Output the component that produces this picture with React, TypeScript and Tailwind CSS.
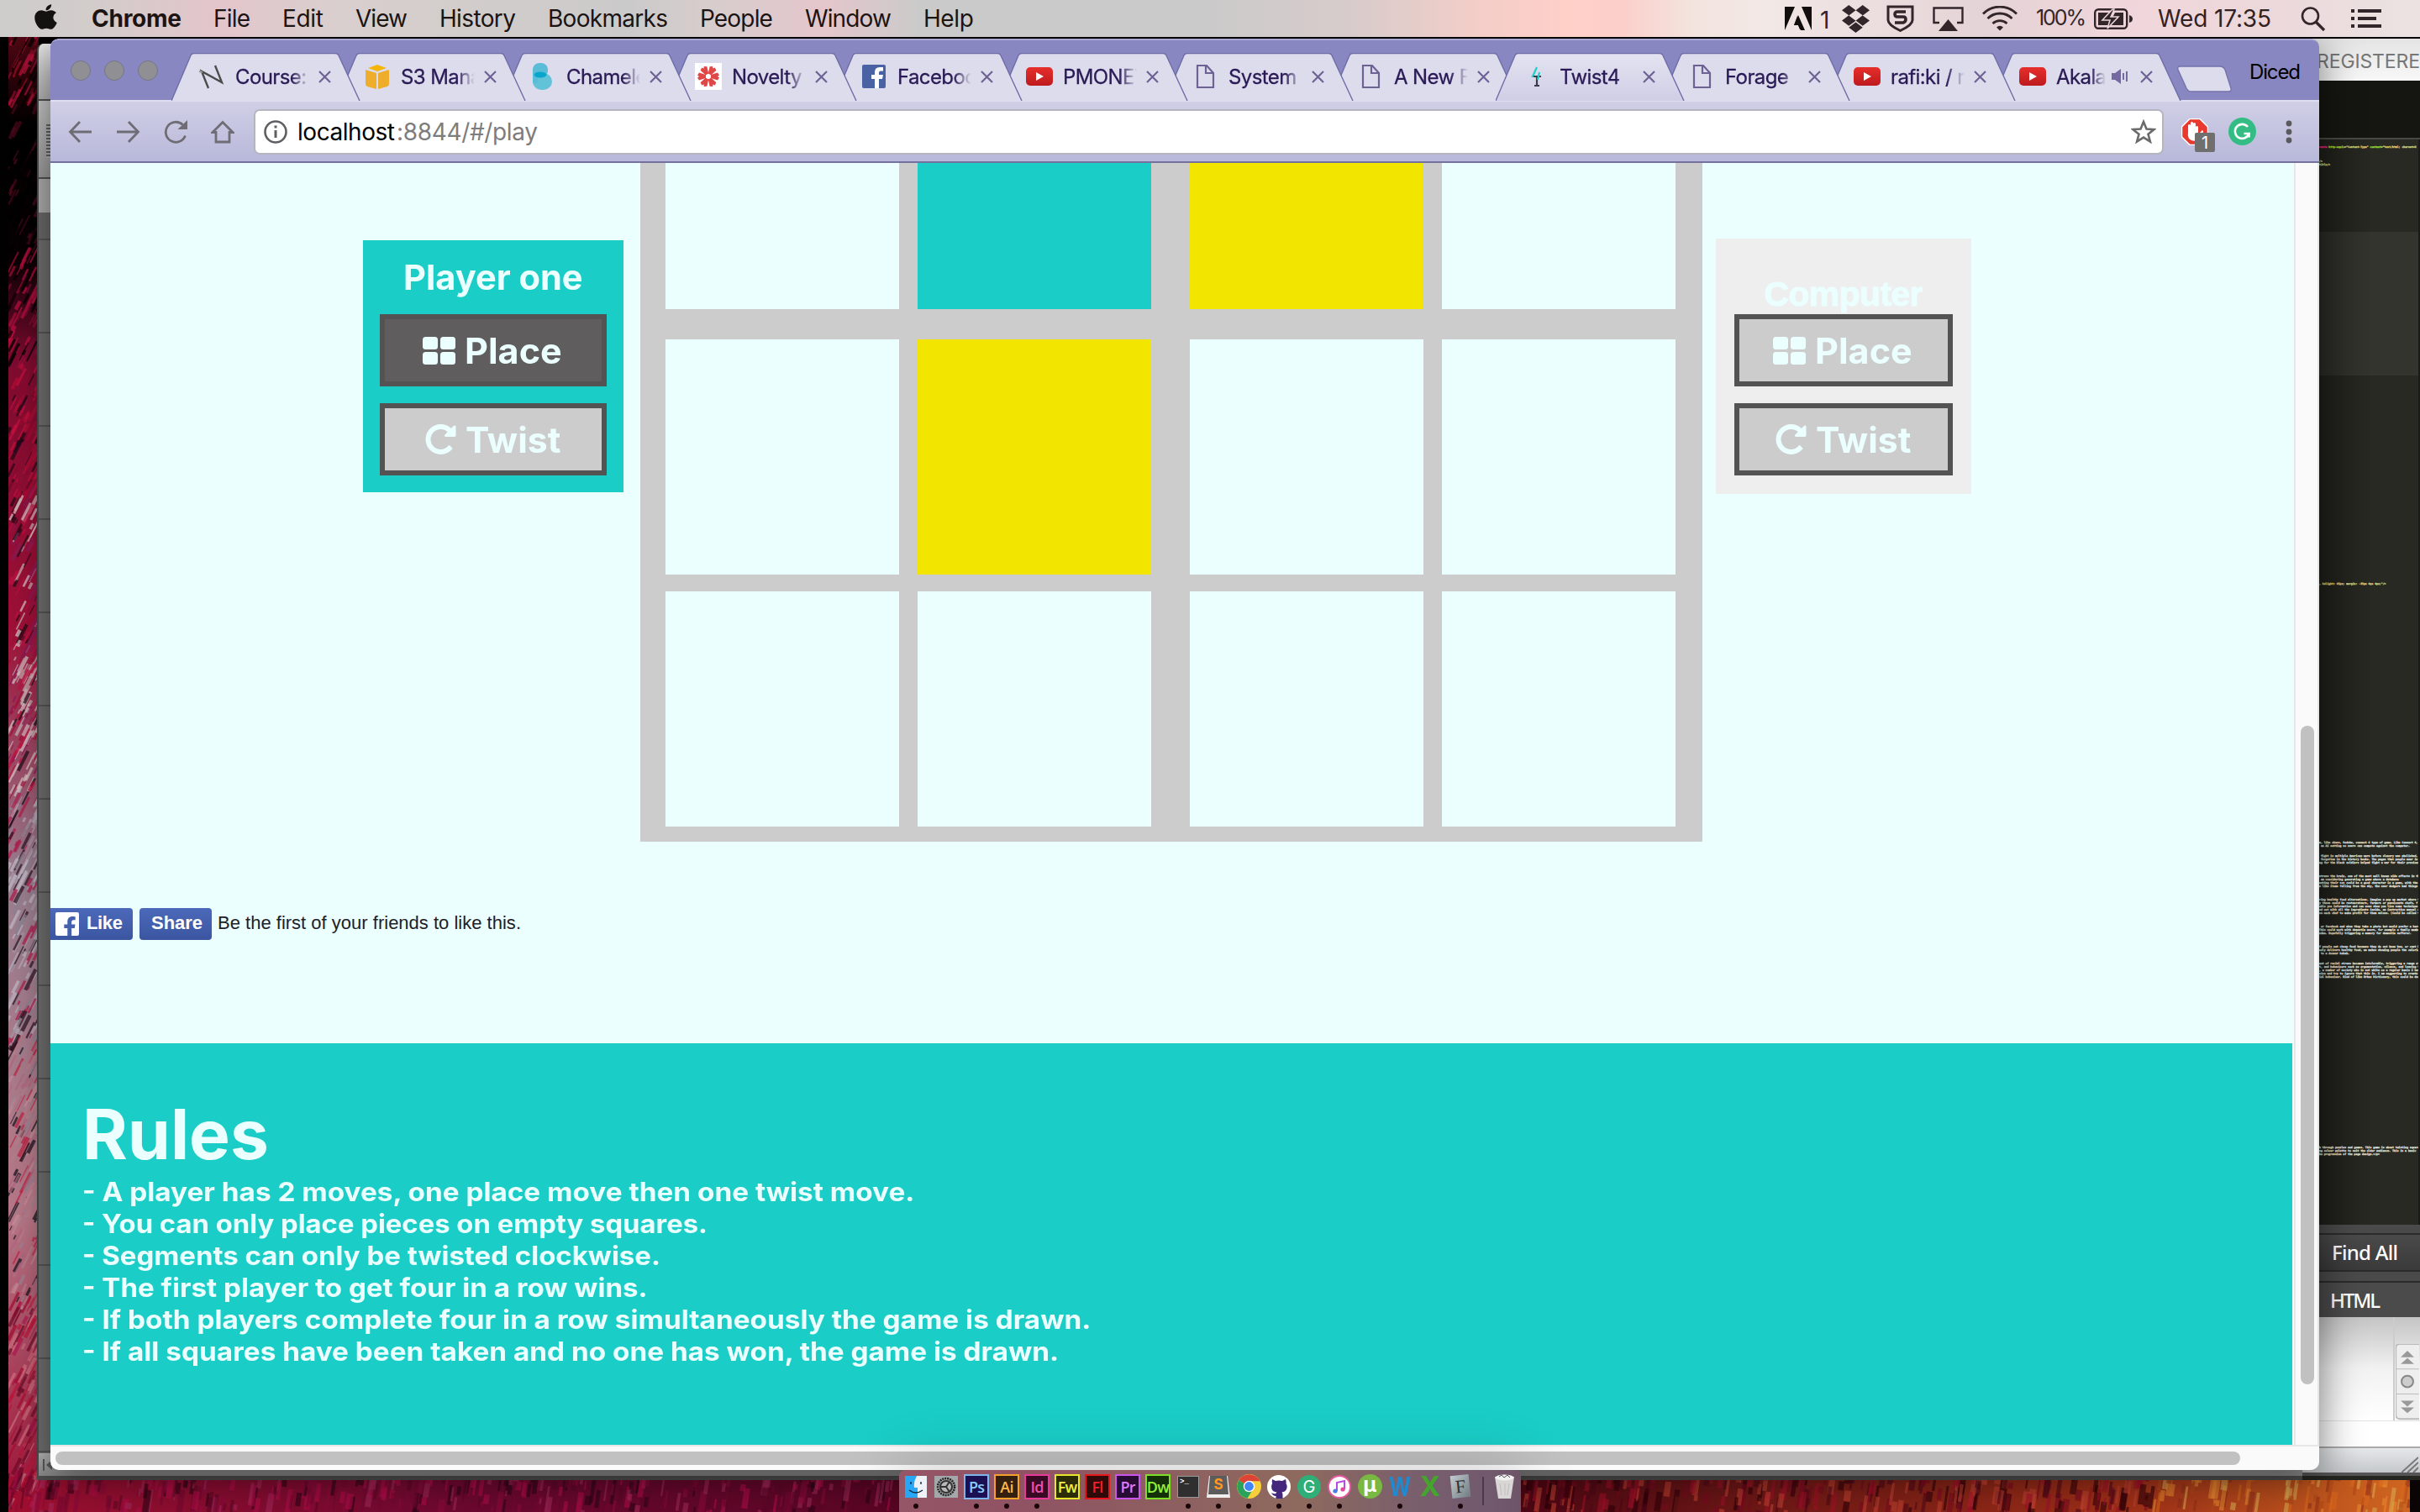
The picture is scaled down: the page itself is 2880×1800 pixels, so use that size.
import React, { useLayoutEffect, useRef, useState } from "react";
import { FaApple, FaDropbox, FaFacebookF, FaGithubAlt } from "react-icons/fa";

/* Text whose tracking is tuned so that it fills the given width. */
function Fit({ w, className = "", children }: { w: number; className?: string; children: string }) {
  const ref = useRef<HTMLSpanElement>(null);
  const [ls, setLs] = useState(0);
  useLayoutEffect(() => {
    if (ref.current) {
      const natural = ref.current.getBoundingClientRect().width;
      setLs((w - natural) / Math.max(1, children.length - 1));
    }
  }, [w, children]);
  return (
    <span ref={ref} className={"inline-block whitespace-pre " + className} style={{ letterSpacing: ls, marginRight: -ls }}>
      {children}
    </span>
  );
}

/* Text whose glyphs are widened so that it fills the given width. */
function Wide({ w, className = "", children }: { w: number; className?: string; children: string }) {
  const ref = useRef<HTMLSpanElement>(null);
  const [k, setK] = useState(1);
  useLayoutEffect(() => {
    if (ref.current) setK(w / ref.current.offsetWidth);
  }, [w, children]);
  return (
    <span className={"inline-block whitespace-pre " + className} style={{ width: w }}>
      <span ref={ref} className="inline-block origin-left" style={{ transform: `scaleX(${k})` }}>{children}</span>
    </span>
  );
}

/* ---------- wallpaper ---------- */
function rng(seed: number) {
  let s = seed;
  return () => {
    s = (s * 16807) % 2147483647;
    return s / 2147483647;
  };
}

function Wallpaper() {
  const r = rng(77);
  const zone = (y: number) => {
    if (y < 130) return ["#8f0f2c", "#b3123a", "#000", "#300"];
    if (y < 310) return ["#000", "#0a0104", "#4c0a1c", "#000"];
    if (y < 440) return ["#a80f38", "#000", "#7a0b35", "#c01040"];
    if (y < 600) return ["#b00c34", "#8f0a30", "#c8103f", "#200818"];
    if (y < 960) return ["#c01040", "#a30d36", "#d9c8c8", "#1c0a14", "#8b1a58", "#c8b8b8"];
    if (y < 1250) return ["#a89aa8", "#c3b9c6", "#b01848", "#b8aebc", "#8f8494", "#2a1020"];
    if (y < 1560) return ["#9c8496", "#b8808c", "#c8909c", "#c02040", "#101018", "#b06880"];
    return ["#c01238", "#a00c30", "#d07080", "#700a28", "#b01850"];
  };
  const left = Array.from({ length: 900 }, () => {
    const y = 44 + r() * 1756;
    const c = zone(y);
    return { x: 8 + r() * 34, y, l: 4 + r() * 22, c: c[Math.floor(r() * c.length)], w: 1 + r() * 3.5 };
  });
  const bottom = Array.from({ length: 1100 }, () => {
    const x = r() * 2880;
    const c =
      x > 2560
        ? ["#d8651c", "#e88830", "#b04818", "#d8a850", "#903018"]
        : x > 1800
          ? ["#7a0a20", "#a01028", "#300008", "#c04030", "#500818"]
          : ["#8a0a3a", "#5c0726", "#b00c48", "#2c0414", "#740830", "#a02858"];
    return { x, y: 1758 + r() * 52, l: 6 + r() * 26, c: c[Math.floor(r() * c.length)], w: 2 + r() * 6 };
  });
  return (
    <svg className="absolute inset-0" width="2880" height="1800" viewBox="0 0 2880 1800">
      <defs>
        <linearGradient id="wl" x1="0" y1="0" x2="0" y2="1">
          <stop offset="0" stopColor="#500814" />
          <stop offset=".06" stopColor="#000" />
          <stop offset=".15" stopColor="#080004" />
          <stop offset=".22" stopColor="#800c30" />
          <stop offset=".4" stopColor="#a01038" />
          <stop offset=".57" stopColor="#9a8090" />
          <stop offset=".8" stopColor="#b87888" />
          <stop offset="1" stopColor="#a01035" />
        </linearGradient>
        <linearGradient id="wb" x1="0" y1="0" x2="1" y2="0">
          <stop offset="0" stopColor="#a01030" />
          <stop offset=".2" stopColor="#6c0830" />
          <stop offset=".6" stopColor="#480414" />
          <stop offset=".88" stopColor="#a03018" />
          <stop offset="1" stopColor="#d06820" />
        </linearGradient>
      </defs>
      <rect width="2880" height="1800" fill="#050103" />
      <rect x="10" y="44" width="36" height="1756" fill="url(#wl)" />
      <rect x="10" y="1758" width="2870" height="42" fill="url(#wb)" />
      {left.map((s, i) => (
        <path key={i} d={`M${s.x} ${s.y}l${s.l * 0.5} ${-s.l}`} stroke={s.c} strokeWidth={s.w} opacity=".7" />
      ))}
      {bottom.map((s, i) => (
        <path key={i} d={`M${s.x} ${s.y}l${s.l * 0.15} ${-s.l}`} stroke={s.c} strokeWidth={s.w} opacity=".6" />
      ))}
      <rect x="0" y="44" width="10" height="1756" fill="#020202" />
      <rect x="2868" y="1762" width="12" height="38" fill="#0a0404" />
    </svg>
  );
}

/* ---------- menu bar ---------- */
const menus: [string, number][] = [
  ["File", 44], ["Edit", 49], ["View", 62], ["History", 91], ["Bookmarks", 143], ["People", 87], ["Window", 103], ["Help", 60],
];

function MenuBar() {
  return (
    <div className="absolute left-0 top-0 flex h-11 w-[2880px] items-center bg-[linear-gradient(90deg,#cdcdcb_0%,#d3cccb_4%,#e3c5ca_9%,#d9cfce_14%,#d2cdcb_19%,#cbcaca_26%,#d6cdcc_29%,#e4c6cc_34%,#cbcaca_38%,#cbcaca_50%,#d8cccb_56%,#f3cdc8_61%,#ffd0c8_65%,#fccfca_67%,#f3e4de_70%,#f2e8e6_73%,#e4d3d6_82%,#f0d6da_88%,#ecd8da_94%,#ebe3e2_100%)] text-[28px] text-[#1c1412]">
      <FaApple className="ml-[41px] mt-[-4px] h-[34px] w-[27px] text-[#141210]" preserveAspectRatio="none" />
      <Fit w={107} className="ml-[41px] font-bold">Chrome</Fit>
      <div className="ml-[38px] flex items-center gap-[38px]">
        {menus.map(([m, w]) => (
          <Fit key={m} w={w}>{m}</Fit>
        ))}
      </div>
      <div className="ml-auto flex items-center pr-[46px] text-[#33262a]">
        <svg width="32" height="28" viewBox="0 0 32 28">
          <path d="M0 0h32v28H0z" fill="#120e0e" />
          <path d="M12 0h8l12 28h-8l-8-18-5 12h5l3 6H0z" fill="#efe4e2" />
          <path d="M15 11l7 16h-4l-2-5h-5z" fill="#120e0e" />
        </svg>
        <span className="ml-[10px] mt-[4px] w-[14px]">1</span>
        <FaDropbox className="ml-[12px] h-[33px] w-[33px]" preserveAspectRatio="none" viewBox="0 32 528 448" />
        <svg className="ml-[20px]" width="33" height="32" viewBox="0 0 33 32" fill="none" stroke="currentColor">
          <path d="M2 2h29v16c0 5-7 9-14.500 12.500C9 27 2 23 2 18z" strokeWidth="3" />
          <path d="M23 8H13q-3 0-3 3t3 3h7q3 0 3 3t-3 4h-10" strokeWidth="3.600" />
        </svg>
        <svg className="ml-[22px]" width="37" height="29" viewBox="0 0 37 29">
          <path d="M8 19H1.500V1.500h34V19H29" fill="none" stroke="currentColor" strokeWidth="2.400" />
          <path d="M18.500 15L30 29H7z" fill="currentColor" />
        </svg>
        <svg className="ml-[22px]" width="42" height="30" viewBox="0 0 42 30" fill="none" stroke="currentColor" strokeWidth="2.800">
          <path d="M1 9.500a28 28 0 0 1 40 0M6.500 15a20.500 20.500 0 0 1 29 0M12.500 21a12.500 12.500 0 0 1 17 0" />
          <path d="M21 29.500l-4-4a5.500 5.500 0 0 1 8 0z" fill="currentColor" stroke="none" />
        </svg>
        <Fit w={60} className="ml-[22px] text-[25px]">100%</Fit>
        <svg className="ml-[9px]" width="46" height="25" viewBox="0 0 46 25">
          <rect x="1.200" y="1.200" width="38" height="22.500" rx="4" fill="none" stroke="currentColor" strokeWidth="2.400" />
          <path d="M5 5h17l-9 9h7l-3 6H5zM35 20H20l9-9h-7l3-6h10z" fill="currentColor" />
          <path d="M22 1l-12 13h9l-3 10 13-14h-9l4-9z" fill="currentColor" stroke="#ead5d9" strokeWidth="1.500" />
          <path d="M42 8q4 1 4 4.500t-4 4.500z" fill="currentColor" />
        </svg>
        <Fit w={135} className="ml-[30px] text-[#33211f]">Wed 17:35</Fit>
        <svg className="ml-[35px]" width="30" height="29" viewBox="0 0 30 29" fill="none" stroke="currentColor" strokeWidth="2.600">
          <circle cx="11.500" cy="11" r="9.500" />
          <path d="M18 18l10 10" strokeWidth="3.400" />
        </svg>
        <svg className="ml-[30px]" width="36" height="22" viewBox="0 0 36 22" fill="currentColor">
          <path d="M0 0h4v4H0zM8 0h28v4H8zM0 9h4v4H0zM8 9h22v4H8zM0 18h4v4H0zM8 18h28v4H8z" />
        </svg>
      </div>
    </div>
  );
}

/* ---------- windows behind the browser ---------- */
const notes: { top: string; lines: string[] }[] = [
  { top: "mt-[0px]", lines: ["m, like chess, Sudoku, connect 4 type of game. Like Connect 4,", " an AI setting so users can compete against the computer."] },
  { top: "mt-[8px]", lines: [" fight in multiple American wars before slavery was abolished, t", " forgotten in the history books. The pages that people wear in", "ng for the black soldiers helped fight a war for their previous"] },
  { top: "mt-[12px]", lines: ["stress the brain, one of the most well known side effects in the", " am considering generating a game where a database", "enting their son could be a good character in a game, with the s", "e like items falling from the sky, the user dodgers bad things"] },
  { top: "mt-[12px]", lines: ["ring healthy food alternatives. Imagine a pop up market where t", "y these could be restaurateurs, farmers or passionate chefs, f", "able you information and can even show you live some technique", "ed out with all the ingredients inside, an instruction manual a", "ve each chef to make profit for them selves. (Could be called t"] },
  { top: "mt-[12px]", lines: [" or facebook and when they take a photo but would prefer a hard", "This could work with dementia users, for example a family member", "ndma. Hopefully triggering a memory for dementia sufferer."] },
  { top: "mt-[12px]", lines: ["f people eat cheap food because they do not know how, or cant be", "only delivers healthy food, we makes showing people the calorie", " to a donner kebab."] },
  { top: "mt-[8px]", lines: ["ant of racial stress becomes intolerable, triggering a range of", "t, and behaviours such as argumentation, silence, and leaving t", ", a number of society who is not white on a regular basis I have", "sion and try to ignore that this is. I am suggesting to create a", "ial behaviour. Kind of like Urban Dictionary, this could be don"] },
  { top: "mt-[199px]", lines: ["h through puzzles and games. This game is about twisting squares", "ng colour palette to suit the older audience. This is a basic", "he progression of the page design.</p>"] },
];

function BackWindows() {
  return (
    <>
      <div className="absolute left-[44px] top-[52px] flex h-[1710px] w-[2836px] flex-col overflow-hidden rounded-tl-lg border-b-[5px] border-l-2 border-[#4f4f4f] bg-[#6f6f6f]">
        <div className="h-[68px] w-4 border-b-2 border-[#555] bg-gradient-to-b from-[#ededed] to-[#bdbdbd]" />
        <div className="flex h-[93px] w-4 items-start justify-end border-b-2 border-[#555] bg-gradient-to-b from-[#d0d0d0] to-[#a2a2a2]">
          <div className="mt-[28px] h-[40px] w-[7px] bg-[repeating-linear-gradient(180deg,#666_0_2px,#bbb_2px_4px)]" />
        </div>
        <div className="h-[40px] w-4 bg-[#b5b5b5]" />
        <div className="h-[33px] w-4 border-b-2 border-[#5a5a5a]" />
        <div className="flex-1 bg-[repeating-linear-gradient(180deg,#747474_0_109px,#5a5a5a_109px_111px)]" />
        <div className="flex h-[27px] items-center bg-gradient-to-b from-[#bdbdbd] to-[#8c8c8c] pl-1">
          <svg width="14" height="14" viewBox="0 0 14 14" fill="#5c5c5c"><path d="M1 0h2v14H1zM12 1v12L5 7z" /></svg>
        </div>
      </div>
      <div className="absolute left-[2740px] top-[46px] flex h-[1716px] w-[140px] flex-col overflow-hidden bg-[#252620]">
        <div className="flex h-[50px] shrink-0 items-center justify-end bg-gradient-to-b from-[#e4e4e4] to-[#f8f8f8] text-[23px] text-[#777]">
          <Fit w={123} className="mt-[5px]">REGISTERE</Fit>
        </div>
        <div className="h-[70px] shrink-0 border-b-2 border-[#484844] bg-[#151611]" />
        <div className="relative h-[1292px] shrink-0 overflow-hidden border-r-2 border-[#1a1a1a] bg-gradient-to-r from-[#1b1c17] to-[#282922] to-60% pl-[20px] font-['DejaVu_Sans_Mono'] text-[3.150px] font-bold leading-[4px] whitespace-pre text-[#e4e4de] [-webkit-text-stroke:0.25px_currentColor]">
          <div className="mt-[7px] text-[#e0dc80]"><span className="text-[#f92672]">=meta </span><span className="text-[#a6e22e]">http-equiv</span>="Content-Type" <span className="text-[#a6e22e]">content</span>="text/html; charset=U</div>
          <div className="mt-[13px] text-[#e0d884]">/&gt;</div>
          <div className="text-[#e0d884]">title/&gt;</div>
          <div className="-ml-[20px] mt-[78px] h-[171px] bg-white/5" />
          <div className="mt-[246px] text-[#e0d884]">, helight: 45px; margin: -35px 0px 0px;"/&gt;</div>
          <div className="mt-[304px]">
            {notes.map((n, i) => (
              <div key={i} className={n.top}>
                {n.lines.map((l) => <div key={l}>{l}</div>)}
              </div>
            ))}
          </div>
        </div>
        <div className="flex h-[110px] shrink-0 flex-col bg-[#4a4a4a] font-['Noto_Sans'] text-[24px] font-medium text-white">
          <div className="mt-[10px] flex h-[46px] items-center border-y-2 border-[#2b2b2b] bg-gradient-to-b from-[#4a4a4a] to-[#3a3a3a] pl-[35px]">
            <Fit w={79}>Find All</Fit>
          </div>
          <div className="mt-[11px] flex h-[43px] items-center border-t-2 border-[#2b2b2b] bg-[#4b4b4b] pl-[33px]">
            <Fit w={60}>HTML</Fit>
          </div>
        </div>
        <div className="flex h-[123px] shrink-0 bg-gradient-to-b from-[#c4c4c4] via-[#f2f2f2] via-50% to-white">
          <div className="w-[110px] border-r-2 border-[#ccc]" />
          <div className="flex flex-1 flex-col items-center">
            <div className="h-[32px]" />
            <svg width="28" height="92" viewBox="0 0 28 92">
              <rect x="0" y="0" width="34" height="90" rx="5" fill="#eee" stroke="#bbb" strokeWidth="2" />
              <path d="M0 30h28M0 60h28" stroke="#bbb" />
              <path d="M6 16l8-8 8 8zM6 24l8-7 8 7zM6 68l8 7 8-7zM6 76l8 7 8-7z" fill="#999" />
              <ellipse cx="14" cy="45" rx="7" ry="7" fill="#ccc" stroke="#888" strokeWidth="2" />
            </svg>
          </div>
        </div>
        <div className="h-[31px] shrink-0 border-t border-[#e4e4e4] bg-white" />
        <div className="flex h-[35px] shrink-0 items-end justify-end border-b-[4px] border-t-2 border-b-[#555] border-t-[#aaa] bg-gradient-to-b from-[#e6e8ea] to-[#c5c8ca]">
          <svg className="mr-[2px]" width="20" height="20" viewBox="0 0 20 20" stroke="#777" strokeWidth="2"><path d="M0 20L20 2M7 20L20 8M14 20l6-6" /></svg>
        </div>
      </div>
    </>
  );
}

/* ---------- browser tabs ---------- */
type Fav = "n" | "s3" | "b" | "nov" | "fb" | "yt" | "doc" | "tw";
const tabs: { title: string; fav: Fav; active?: boolean; audio?: boolean }[] = [
  { title: "Course:", fav: "n" },
  { title: "S3 Mana", fav: "s3" },
  { title: "Chamele", fav: "b" },
  { title: "Novelty", fav: "nov" },
  { title: "Faceboo", fav: "fb" },
  { title: "PMONEY", fav: "yt" },
  { title: "System", fav: "doc" },
  { title: "A New F", fav: "doc" },
  { title: "Twist4", fav: "tw", active: true },
  { title: "Forage", fav: "doc" },
  { title: "rafi:ki / r", fav: "yt" },
  { title: "Akala", fav: "yt", audio: true },
];

function Favicon({ kind }: { kind: Fav }) {
  switch (kind) {
    case "n":
      return <svg width="32" height="32" viewBox="0 0 32 32" fill="none"><path d="M12 30L4 10l24 13L20 3" stroke="#4c4c4c" strokeWidth="2.400" /><path d="M1 10l4 1" stroke="#999" strokeWidth="2" /></svg>;
    case "s3":
      return <svg width="32" height="32" viewBox="0 0 32 32"><path d="M2 8l13 4v19L4 28q-2-1-2-3zM30 8l-13 4v19l11-3q2-1 2-3z" fill="#eeae2c" /><path d="M16 2L5 6l11 4 11-4z" fill="#f5b50c" /></svg>;
    case "b":
      return <svg width="32" height="32" viewBox="0 0 32 32"><rect x="4" y="0" width="18" height="17" rx="8" fill="#5bbcd8" /><rect x="4" y="12" width="23" height="20" rx="10" fill="#62c3d8" /><path d="M4 7h6v17H4z" fill="#5bbcd8" /><ellipse cx="13" cy="14" rx="7.500" ry="3.500" fill="#08a6cc" /></svg>;
    case "nov":
      return (
        <svg width="32" height="32" viewBox="0 0 32 32">
          <path d="M0 0h32v32H0z" fill="#fff" />
          <g fill="#e04848">
            {[30, 90, 150, 210, 270, 330].map((a) => <path key={a} d="M14 13l-2.500-8 3-2 1.500 2 1.500-2 3 2L18 13z" transform={`rotate(${a} 16 16)`} />)}
          </g>
          <circle cx="16" cy="16" r="2.600" fill="#fff" />
        </svg>
      );
    case "fb":
      return <svg width="32" height="32" viewBox="0 0 32 32"><rect x="2" y="2" width="28" height="28" rx="2" fill="#4862a3" /><path d="M17 30V19h-4v-5h4v-3q0-6 6-6h4v4.500h-3q-2 0-2 2V14h5l-1 5h-4v11z" fill="#fff" /></svg>;
    case "yt":
      return (
        <svg width="32" height="32" viewBox="0 0 32 32">
          <defs><linearGradient id="ytg" x1="0" y1="0" x2="0" y2="1"><stop offset="0" stopColor="#e62e2b" /><stop offset="1" stopColor="#be1a1e" /></linearGradient></defs>
          <rect x="0" y="5" width="32" height="22" rx="5" fill="url(#ytg)" /><path d="M12 11l9 5-9 5z" fill="#fff" />
        </svg>
      );
    case "doc":
      return <svg width="32" height="32" viewBox="0 0 32 32" fill="none" stroke="#6d6293" strokeWidth="2.200"><path d="M7 3h11l8 9v17H7zM17 3v9h9" /></svg>;
    default:
      return <svg width="32" height="32" viewBox="0 0 32 32" fill="none" strokeWidth="2.200"><path d="M17 5l-5 11h9" stroke="#1fcfc8" /><path d="M17 15v12M13 16h9M14 27h6" stroke="#3b3b4b" /><path d="M20 11l-2 9" stroke="#1fcfc8" /></svg>;
  }
}

function Tab({ t, z }: { t: (typeof tabs)[number]; z: number }) {
  return (
    <div className="relative -mr-[27px] flex h-[56px] w-[224px] shrink-0 items-center pl-[32px]" style={{ zIndex: z }}>
      <svg className="absolute left-0 top-0" width="226" height="57" viewBox="0 0 226 57">
        <defs><linearGradient id="actg" x1="0" y1="0" x2="0" y2="1"><stop offset="0" stopColor="#e4e3f1" /><stop offset="1" stopColor="#cfcee6" /></linearGradient></defs>
        <path d="M0 57L23 3q1-2.500 4-2.500h168q3 0 4 2.500L224 57z" fill={t.active ? "url(#actg)" : "#dddcec"} />
        <path d="M0 57L23 3q1-2.500 4-2.500h168q3 0 4 2.500L224 57" fill="none" stroke="#6f6da8" strokeWidth="1.400" />
      </svg>
      <div className="relative shrink-0"><Favicon kind={t.fav} /></div>
      <div className={"relative ml-[12px] mt-[1px] shrink-0 overflow-hidden whitespace-pre text-[24px] tracking-[-0.6px] text-[#2a1a55] [-webkit-text-stroke:0.3px_#2a1a55] " + (t.audio ? "w-[59px] [mask-image:linear-gradient(90deg,#000_70%,transparent)]" : "w-[88px] [mask-image:linear-gradient(90deg,#000_76%,transparent)]")}>
        {t.title}
      </div>
      {t.audio && (
        <svg className="relative ml-[7px]" width="20" height="18" viewBox="0 0 20 18" fill="#7668a0"><path d="M0 5h4l7-5v18l-7-5H0zM13 5h2v8h-2zM17 3h2v12h-2z" /></svg>
      )}
      <svg className={t.audio ? "relative ml-[14px]" : "relative ml-[11px]"} width="15" height="15" viewBox="0 0 15 15" stroke="#6d6293" strokeWidth="2.200"><path d="M1 1l13 13M14 1L1 14" /></svg>
    </div>
  );
}

function TabStrip() {
  return (
    <div className="flex h-[73px] items-end rounded-t-[9px] border-t-2 border-[#a9a8d4] bg-[#8987c1]">
      <div className="mb-[23px] ml-[24px] flex w-[120px] gap-4">
        {[0, 1, 2].map((i) => <div key={i} className="size-6 rounded-full border border-[#757585] bg-[#909094]" />)}
      </div>
      <div className="isolate flex">
        {tabs.map((t, i) => <Tab key={i} t={t} z={t.active ? 20 : 12 - i} />)}
      </div>
      <svg className="mb-[9px] ml-[22px]" width="66" height="32" viewBox="0 0 66 32"><path d="M4 1h48q4 0 6 4l7 22q1 4-3 4H18q-4 0-6-4L2 5q-1-4 2-4z" fill="#dddcec" stroke="#7472aa" strokeWidth="1.400" /></svg>
      <Fit w={61} className="mb-[15px] ml-[21px] text-[24px] text-black">Diced</Fit>
    </div>
  );
}

function Toolbar() {
  return (
    <div className="flex h-[75px] items-center border-b-2 border-t-2 border-b-[#74719f] border-t-[#dfdef0] bg-gradient-to-b from-[#d0cfe6] to-[#b8b8da] pl-[21px] text-[#6e6d75]">
      <div className="flex items-center gap-[28px]">
        <svg width="29" height="28" viewBox="0 0 29 28" fill="none" stroke="currentColor" strokeWidth="2.800"><path d="M28 14H3M14 2L2.500 14 14 26" /></svg>
        <svg width="29" height="28" viewBox="0 0 29 28" fill="none" stroke="currentColor" strokeWidth="2.800"><path d="M1 14h25M15 2l11.500 12L15 26" /></svg>
        <svg width="28" height="28" viewBox="0 0 28 28" fill="none" stroke="currentColor" strokeWidth="2.800"><path d="M25.500 18.500A12 12 0 1 1 22.500 5.500" /><path d="M28 0v11H16.500z" fill="currentColor" stroke="none" /></svg>
        <svg width="28" height="28" viewBox="0 0 28 28" fill="none" stroke="currentColor" strokeWidth="2.800"><path d="M2 14.500L14 2.500l12 12h-4V26H6V14.500z" /></svg>
      </div>
      <div className="ml-[23px] flex h-[54px] w-[2273px] items-center rounded-[7px] border-2 border-[#b5b5bf] bg-white pl-[10px] pr-[7px] text-[28px]">
        <svg width="28" height="28" viewBox="0 0 28 28" fill="none" stroke="#5f5f63" strokeWidth="2.600"><circle cx="14" cy="14" r="12.500" /><path d="M14 12v9M14 6.500v3" strokeWidth="3" /></svg>
        <Fit w={116} className="ml-[12px] text-black">localhost</Fit>
        <Fit w={168} className="ml-[2px] text-[#7d7d7d]">:8844/#/play</Fit>
        <svg className="ml-auto" width="30" height="29" viewBox="0 0 30 29" fill="none" stroke="#6b6b6b" strokeWidth="2.600"><path d="M15 3l3.500 8.500 9 .6-7 5.700 2.400 8.800L15 21.600l-7.900 5 2.400-8.800-7-5.700 9-.6z" /></svg>
      </div>
      <div className="relative ml-[21px] mt-[1px] size-[32px]">
        <svg width="32" height="32" viewBox="0 0 32 32"><path d="M10 .5h12L31.500 10v12L22 31.500H10L.5 22V10z" fill="#e9392f" stroke="#fff" strokeWidth="1.500" /><path d="M10 17V8q1.500-2 3 0v6-9q1.500-2 3 0v9-8q1.500-2 3 0v9-5q1.500-2 3 0v9l5-5q2 1 0 4l-5 7q-6 4-11-1-2-4-1-7z" fill="#fff" transform="translate(-2 0)" /></svg>
        <div className="absolute left-[16px] top-[17px] flex h-[23px] w-[24px] items-center justify-center rounded-[2px] bg-[#6f6f70] text-[20px] text-white">1</div>
      </div>
      <svg className="ml-[24px]" width="33" height="33" viewBox="0 0 33 33"><circle cx="16.500" cy="16.500" r="16.500" fill="#33bd84" /><path d="M23 11a8.500 8.500 0 1 0 1.500 8h-6m6 0v4.500" fill="none" stroke="#fff" strokeWidth="2.600" /></svg>
      <svg className="ml-[35px]" width="8" height="28" viewBox="0 0 8 28" fill="#5a5a5e"><circle cx="4" cy="4" r="3.400" /><circle cx="4" cy="14" r="3.400" /><circle cx="4" cy="24" r="3.400" /></svg>
    </div>
  );
}

/* ---------- game page ---------- */
function GridIcon() {
  return (
    <svg width="39" height="33" viewBox="0 0 39 33" fill="#ebffff">
      <rect width="18" height="15" rx="3.500" /><rect x="21" width="18" height="15" rx="3.500" />
      <rect y="18" width="18" height="15" rx="3.500" /><rect x="21" y="18" width="18" height="15" rx="3.500" />
    </svg>
  );
}
function RepeatIcon() {
  return (
    <svg width="37" height="36" viewBox="128 128 1536 1536" fill="#ebffff">
      <path d="M1664 256v448q0 26-19 45t-45 19h-448q-42 0-59-40-17-39 14-69l138-138q-148-137-349-137-104 0-198.500 40.500t-163.500 109.500-109.500 163.500-40.500 198.500 40.500 198.500 109.500 163.500 163.500 109.500 198.500 40.500q119 0 225-52t179-147q7-10 23-12 15 0 25 9l137 138q9 8 9.500 20.500t-7.500 22.500q-109 132-264 204.500t-327 72.500q-156 0-298-61t-245-164-164-245-61-298 61-298 164-245 245-164 298-61q147 0 284.500 55.500t244.500 156.500l130-129q29-31 70-14 39 17 39 59z" />
    </svg>
  );
}

function Moves({ active }: { active?: boolean }) {
  return (
    <div className="flex flex-col gap-5 text-[42px] font-bold leading-none text-[#ebffff]">
      <div className={"flex h-[86px] items-center justify-center border-[6px] border-[#535353] pr-[2px] " + (active ? "bg-[#605d5e]" : "bg-[#cccccc]")}>
        <GridIcon />
        <Wide w={116} className="ml-[11px] mt-[1px]">Place</Wide>
      </div>
      <div className="flex h-[86px] items-center justify-center border-[6px] border-[#535353] bg-[#cccccc] pr-[2px]">
        <RepeatIcon />
        <Wide w={113} className="ml-[11px] mt-[1px]">Twist</Wide>
      </div>
    </div>
  );
}

const E = "bg-[#ebffff]";
const T = "bg-[#1acdc7]";
const Y = "bg-[#f2e600]";

function Quadrant({ cells, rows }: { cells: string[]; rows: string }) {
  return (
    <div className={"grid grid-cols-[278px_278px] gap-x-[22px] gap-y-5 " + rows}>
      {cells.map((c, i) => <div key={i} className={c} />)}
    </div>
  );
}

function Board() {
  return (
    <div className="ml-5 flex h-[808px] w-[1264px] flex-col gap-9 bg-[#cccccc] pl-[30px]">
      <div className="flex gap-[46px]">
        <Quadrant cells={[E, T]} rows="grid-rows-[174px]" />
        <Quadrant cells={[Y, E]} rows="grid-rows-[174px]" />
      </div>
      <div className="flex gap-[46px]">
        <Quadrant cells={[E, Y, E, E]} rows="grid-rows-[280px_280px]" />
        <Quadrant cells={[E, E, E, E]} rows="grid-rows-[280px_280px]" />
      </div>
    </div>
  );
}

const rules: [string, number][] = [
  ["- A player has 2 moves, one place move then one twist move.", 991],
  ["- You can only place pieces on empty squares.", 744],
  ["- Segments can only be twisted clockwise.", 688],
  ["- The first player to get four in a row wins.", 673],
  ["- If both players complete four in a row simultaneously the game is drawn.", 1200],
  ["- If all squares have been taken and no one has won, the game is drawn.", 1162],
];

function Page() {
  return (
    <div className="flex w-[2670px] flex-col bg-[#ebffff]">
      <div className="flex h-[886px] items-start pl-[372px]">
        <div className="mt-[92px] h-[300px] w-[310px] bg-[#1acdc7] px-5">
          <div className="flex h-[88px] items-center justify-center pt-[2px] text-[41px] font-bold text-[#ebffff]">
            <Wide w={214}>Player one</Wide>
          </div>
          <Moves active />
        </div>
        <Board />
        <div className="ml-4 mt-[90px] h-[304px] w-[304px] bg-[#eeeeee] px-[22px]">
          <div className="flex h-[90px] items-end justify-center font-['Liberation_Sans'] text-[41px] font-bold leading-[47px] text-[#ebffff]">
            <Fit w={189} className="[-webkit-text-stroke:1px_#ebffff]">Computer</Fit>
          </div>
          <Moves />
        </div>
      </div>
      <div className="flex h-10 items-center font-['Liberation_Sans'] text-[22px] font-bold text-white">
        <div className="flex h-[38px] w-[98px] items-center rounded-r-[4px] bg-gradient-to-b from-[#4c69ba] to-[#3b55a0] pl-[6px]">
          <div className="flex size-7 items-end justify-end overflow-hidden rounded-[2px] bg-white pr-[3px] text-[#4560ae]"><FaFacebookF className="-mb-[2px] h-[25px] w-[16px]" /></div>
          <Fit w={43} className="-mt-[3px] ml-[9px]">Like</Fit>
        </div>
        <div className="ml-2 flex h-[38px] w-[86px] items-center rounded-[4px] bg-gradient-to-b from-[#4c69ba] to-[#3b55a0] pl-[14px]">
          <Fit w={61} className="-mt-[3px]">Share</Fit>
        </div>
        <Fit w={361} className="-mt-[4px] ml-[7px] font-normal text-[#1d2129]">Be the first of your friends to like this.</Fit>
      </div>
      <div className="mt-[122px] flex h-[478px] w-[2668px] flex-col bg-[#1acdc7] pl-[38px] pt-[60px] font-bold text-[#ebffff]">
        <div className="flex h-[98px] items-center text-[82px] leading-none"><Wide w={222}>Rules</Wide></div>
        <div className="flex flex-col text-[31px] leading-[38px]">
          {rules.map(([r, w]) => <div key={r} className="h-[38px]"><Wide w={w}>{r}</Wide></div>)}
        </div>
      </div>
    </div>
  );
}

function Browser() {
  return (
    <div className="absolute left-[60px] top-[46px] flex h-[1704px] w-[2700px] flex-col overflow-hidden rounded-b-[10px] rounded-t-[9px] shadow-[0_10px_50px_rgba(0,0,0,0.55)]">
      <TabStrip />
      <Toolbar />
      <div className="flex h-[1526px] overflow-hidden">
        <Page />
        <div className="flex w-[30px] flex-col border-x-2 border-[#e7e7e7] bg-[#fafafa] px-[6px] pt-[670px]">
          <div className="h-[784px] w-4 rounded-full bg-[#c1c1c1]" />
        </div>
      </div>
      <div className="flex h-[30px] items-center border-t-2 border-[#e7e7e7] bg-[#fafafa] pl-[6px] pb-[2px]">
        <div className="mt-[2px] h-4 w-[2600px] rounded-full bg-[#c1c1c1]" />
      </div>
    </div>
  );
}

/* ---------- dock ---------- */
function Adobe({ t, c, bg }: { t: string; c: string; bg: string }) {
  return <div className={"flex size-[30px] items-center justify-center border-2 text-[18px] font-semibold leading-none tracking-[-0.8px] font-['Open_Sans'] " + c + " " + bg}>{t}</div>;
}

const dock: { el: React.ReactNode; on?: boolean }[] = [
  { on: true, el: <svg width="26" height="26" viewBox="0 0 26 26"><path d="M0 0h26v26H0z" fill="#eef2f8" /><path d="M0 0h14q-4 7-3 14h4v12H0z" fill="#27a7f5" /><path d="M7 7v3M19 7v3M5 17q8 6 16 0" fill="none" stroke="#123" strokeWidth="1.400" /></svg> },
  { el: <svg width="28" height="26" viewBox="0 0 28 26"><path d="M0 0h28v26H0z" fill="#a3a8aa" /><circle cx="14" cy="13" r="10" fill="#aaa" stroke="#222" strokeWidth="2.500" strokeDasharray="2 1" /><circle cx="14" cy="13" r="7" fill="#b8b8b8" stroke="#333" strokeWidth="2" /><path d="M14 13H7M14 13l4-6M14 13l4 6" stroke="#333" strokeWidth="2" /></svg> },
  { on: true, el: <Adobe t="Ps" c="border-[#7db4ec] text-[#8ccaff]" bg="bg-[#1b1054]" /> },
  { on: true, el: <Adobe t="Ai" c="border-[#f5a02c] text-[#ffb545]" bg="bg-[#35200f]" /> },
  { on: true, el: <Adobe t="Id" c="border-[#e8389a] text-[#f04fae]" bg="bg-[#380a24]" /> },
  { el: <Adobe t="Fw" c="border-[#e6e62a] text-[#f0f040]" bg="bg-[#2c2c08]" /> },
  { el: <Adobe t="Fl" c="border-[#e8141c] text-[#f02028]" bg="bg-[#300a08]" /> },
  { el: <Adobe t="Pr" c="border-[#c955ee] text-[#dd78ff]" bg="bg-[#280c34]" /> },
  { el: <Adobe t="Dw" c="border-[#7ddf25] text-[#93f03c]" bg="bg-[#143008]" /> },
  { on: true, el: <div className="size-[26px] border border-[#999] bg-[#2f2f30] pl-[2px] font-['Liberation_Mono'] text-[9px] font-bold leading-[12px] text-white">&gt;_</div> },
  { on: true, el: <svg width="30" height="28" viewBox="0 0 30 28"><path d="M4 1h22l3 26H1z" fill="#eee" /><path d="M5 1h20l2 22H3z" fill="#5c5c5c" /><text x="15" y="17" textAnchor="middle" fontFamily="Inter" fontWeight="700" fontSize="17" fill="#ff9822">S</text></svg> },
  { on: true, el: <svg width="29" height="29" viewBox="0 0 28 28"><circle cx="14" cy="14" r="14" fill="#f7cf3a" /><path d="M14 14L2 7A14 14 0 0 1 26.500 8H14z" fill="#dc4437" /><path d="M14 14L2 7a14 14 0 0 0 10 20.800L18 18z" fill="#27a35c" /><circle cx="14" cy="14" r="6.500" fill="#fff" /><circle cx="14" cy="14" r="5.200" fill="#4285f4" /></svg> },
  {
    on: true,
    el: (
      <svg width="28" height="28" viewBox="0 0 28 28">
        <circle cx="14" cy="14" r="14" fill="#fff" />
        <path d="M6 5l4 2q4-1 8 0l4-2q1 3 .5 5 2 3 .5 7-1.500 3-5.500 3.500 1 1 1 3V28q-4 1-8 0v-3q-4 0-5.500-4 3 2 5.500 1 0-1 1-1.500-5-.5-6-4-1-4 .7-6.500Q5.500 8 6 5z" fill="#44267c" />
      </svg>
    ),
  },
  { on: true, el: <div className="flex size-7 items-center justify-center rounded-full bg-[#2fae78] text-[20px] text-white">G</div> },
  { on: true, el: <svg width="28" height="28" viewBox="0 0 28 28"><circle cx="14" cy="14" r="13" fill="#fff" stroke="#e858a0" strokeWidth="1.800" /><path d="M11 19V9l9-2v10" fill="none" stroke="#b54be0" strokeWidth="2" /><circle cx="9" cy="19" r="2.600" fill="#4b7bf0" /><circle cx="18" cy="17" r="2.600" fill="#e0489a" /></svg> },
  { el: <div className="flex size-[29px] items-center justify-center rounded-full bg-[#78b843] pb-1 text-[25px] font-bold leading-none text-white">µ</div> },
  { on: true, el: <Wide w={26} className="text-[31px] font-bold leading-none text-[#2089cf]">W</Wide> },
  { el: <span className="text-[33px] font-bold leading-none text-[#43a52c]">X</span> },
  { on: true, el: <div className="flex h-[27px] w-[22px] -rotate-6 items-center justify-center bg-gradient-to-br from-[#c3ccd0] to-[#6f7c82] font-['Liberation_Serif'] text-[22px] leading-none text-[#333]">F</div> },
];

function Dock() {
  return (
    <div className="absolute left-[1070px] top-[1750px] flex h-[50px] w-[740px] rounded-t-lg bg-[linear-gradient(90deg,#955667_0%,#8f5363_20%,#8d6060_45%,#8e6a5e_65%,#7a5f6c_82%,#71596e_95%,#6f5468_100%)] pl-[2px] shadow-[0_-6px_70px_rgba(0,0,0,0.2)]">
      {dock.map((d, i) => (
        <div key={i} className="flex w-9 shrink-0 flex-col items-center">
          <div className="mt-[4px] flex h-[31px] items-center justify-center">{d.el}</div>
          {d.on && <div className="mt-[5px] size-[6px] rounded-full bg-[#1a0508]" />}
        </div>
      ))}
      <div className="ml-[8px] mt-2 h-[34px] w-[2px] bg-[#4d3848]" />
      <svg className="ml-[12px] mt-[4px]" width="25" height="31" viewBox="0 0 25 31"><path d="M1 4h23l-4 26H5z" fill="#d9d6d6" /><ellipse cx="12.500" cy="5" rx="11" ry="3.500" fill="#f2f2f2" /><path d="M6 4l3-2 3 3 4-3 3 3" fill="none" stroke="#555" /><path d="M7 12l2 14M13 12v14M18 12l-2 14" stroke="#c2bebe" /></svg>
    </div>
  );
}

export default function App() {
  return (
    <div className="relative h-[1800px] w-[2880px] overflow-hidden bg-black font-['Inter',sans-serif]">
      <Wallpaper />
      <BackWindows />
      <Browser />
      <MenuBar />
      <Dock />
    </div>
  );
}
